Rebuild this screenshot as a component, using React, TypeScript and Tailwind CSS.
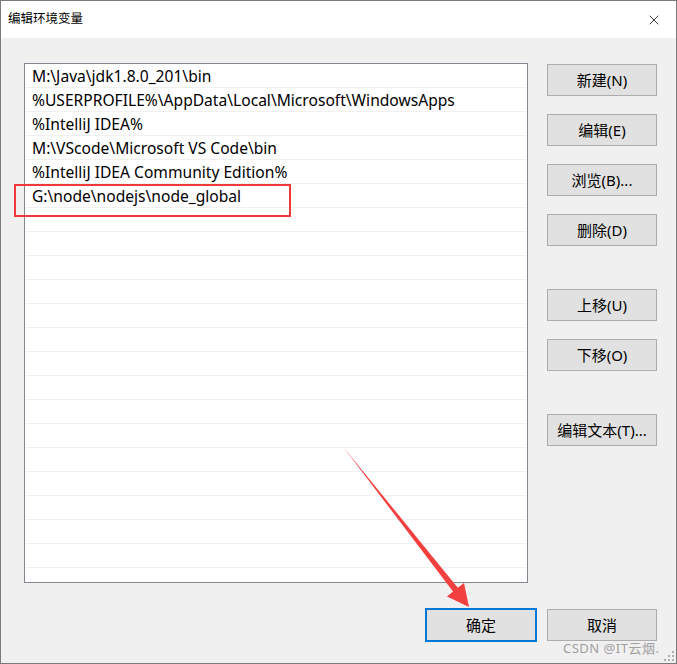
import { X } from "lucide-react";

const paths = [
  "M:\\Java\\jdk1.8.0_201\\bin",
  "%USERPROFILE%\\AppData\\Local\\Microsoft\\WindowsApps",
  "%IntelliJ IDEA%",
  "M:\\VScode\\Microsoft VS Code\\bin",
  "%IntelliJ IDEA Community Edition%",
  "G:\\node\\nodejs\\node_global",
];

const font = { fontFamily: '"Noto Sans", "Noto Sans CJK SC", sans-serif' };

function WinButton({ label, className = "" }: { label: string; className?: string }) {
  return (
    <button
      className={
        "w-[110px] h-[32px] bg-[#e1e1e1] border border-[#adadad] text-[15px] text-black flex items-center justify-center " +
        className
      }
    >
      {label}
    </button>
  );
}

export default function App() {
  const rows = [...paths, ...Array(16).fill("")];

  return (
    <div className="relative w-[677px] h-[664px] border border-[#7a7a7a] bg-[#f0f0f0] flex flex-col overflow-hidden" style={font}>
      {/* title bar */}
      <div className="h-[37px] bg-white flex items-center justify-between pl-[7px] pr-[14px]">
        <span className="text-[12.5px] text-black">编辑环境变量</span>
        <X className="w-[16px] h-[16px] text-black" strokeWidth={1.2} />
      </div>

      <div className="flex-1 flex flex-col pl-[23px] pt-[25px] pr-[19px]">
        <div className="flex">
          <div className="w-[504px] h-[520px] bg-white border border-[#828790] px-px overflow-hidden">
            {rows.map((r, i) => (
              <div key={i} className="h-6 border-b border-[#f0f0f0] pl-[6px] pt-[2px] flex items-center text-[15.6px] text-black whitespace-nowrap">
                {r}
              </div>
            ))}
          </div>

          <div className="ml-[19px] mt-px flex flex-col">
            <WinButton label="新建(N)" />
            <WinButton label="编辑(E)" className="mt-[18px]" />
            <WinButton label="浏览(B)..." className="mt-[18px]" />
            <WinButton label="删除(D)" className="mt-[18px]" />
            <WinButton label="上移(U)" className="mt-[43px]" />
            <WinButton label="下移(O)" className="mt-[18px]" />
            <WinButton label="编辑文本(T)..." className="mt-[43px]" />
          </div>
        </div>

        <div className="flex justify-end items-center gap-[10px] mt-[25px]">
          <button className="w-[112px] h-[34px] bg-[#e1e1e1] border-2 border-[#0078d7] text-[15px] text-black flex items-center justify-center">
            确定
          </button>
          <WinButton label="取消" />
        </div>
      </div>

      {/* red highlight box */}
      <div className="absolute left-[13px] top-[183px] w-[277px] h-[33px] border-2 border-[#f03a3a]" />

      {/* red arrow */}
      <svg className="absolute left-0 top-0" width="677" height="664" viewBox="0 0 677 664">
        <polygon
          points="343,447 456.8,586.8 463,582 468,606 446,595.5 452,590.6"
          fill="#f24040"
        />
      </svg>

      {/* watermark */}
      <span className="absolute left-[562px] top-[638px] text-[13px] text-[#a0a0a0] tracking-[0.5px]">CSDN @IT云烟.</span>

      {/* resize grip */}
      <svg className="absolute right-[1px] bottom-[1px]" width="11" height="11" viewBox="0 0 11 11">
        {[
          [8, 0], [8, 4], [4, 4], [8, 8], [4, 8], [0, 8],
        ].map(([x, y], i) => (
          <rect key={i} x={x} y={y} width="2" height="2" fill="#b0b0b0" />
        ))}
      </svg>
    </div>
  );
}
